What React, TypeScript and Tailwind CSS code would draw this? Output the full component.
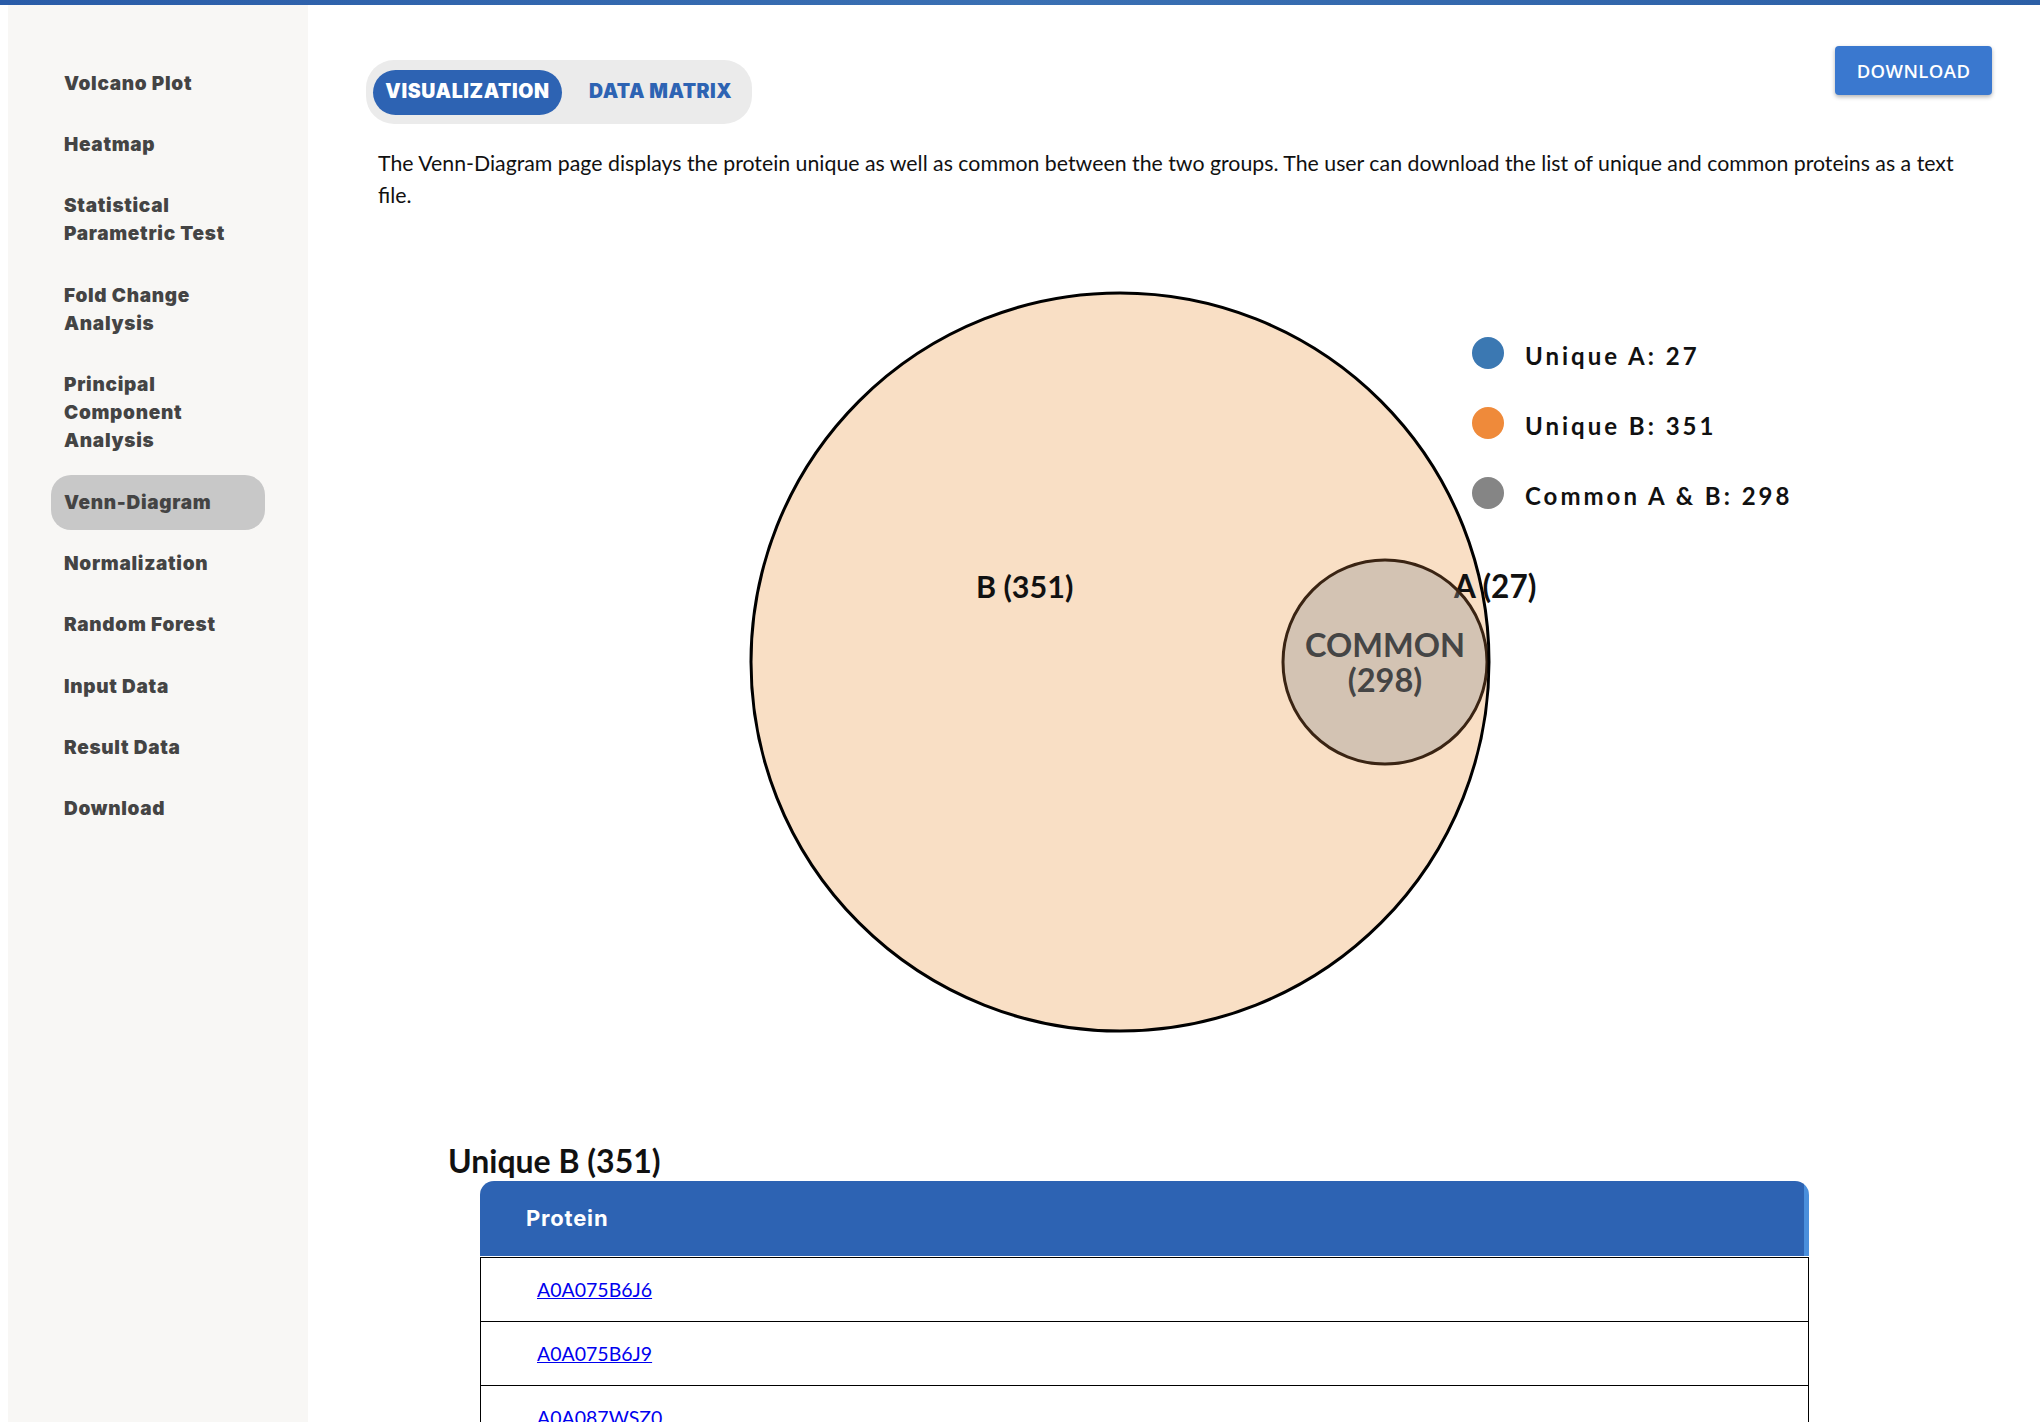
import React from "react";

const navItems: { label: string[]; active?: boolean }[] = [
  { label: ["Volcano Plot"] },
  { label: ["Heatmap"] },
  { label: ["Statistical", "Parametric Test"] },
  { label: ["Fold Change", "Analysis"] },
  { label: ["Principal", "Component", "Analysis"] },
  { label: ["Venn-Diagram"], active: true },
  { label: ["Normalization"] },
  { label: ["Random Forest"] },
  { label: ["Input Data"] },
  { label: ["Result Data"] },
  { label: ["Download"] },
];

const proteins = ["A0A075B6J6", "A0A075B6J9", "A0A087WSZ0", "A0A087WV62", "A0A0A0MS14"];

function Sidebar() {
  return (
    <aside className="w-[300px] shrink-0 bg-[#f8f7f5] pl-[43px] pt-[48px] min-h-[1417px]">
      <ul className="flex flex-col">
        {navItems.map((it) => (
          <li key={it.label.join(" ")} className="my-[3.2px]">
            <div
              className={`w-[214px] rounded-[20px] py-[13.5px] pl-[13px] text-[19px] leading-[28px] font-black tracking-[0.7px] text-[#444444] ${
                it.active ? "bg-[#c8c8c8]" : ""
              }`}
              style={{ fontFamily: "Inter, 'Noto Sans', sans-serif" }}
            >
              {it.label.map((l) => (
                <div key={l}>{l}</div>
              ))}
            </div>
          </li>
        ))}
      </ul>
    </aside>
  );
}

function Venn() {
  const lato = "Lato, 'Liberation Sans', sans-serif";
  return (
    <svg width="1626" height="930" viewBox="0 0 1626 930" className="block">
      <circle cx="754" cy="451" r="369" fill="#f9dfc5" />
      <text x="610" y="387" fontFamily={lato} fontWeight="700" fontSize="30.5" fill="#111">
        B (351)
      </text>
      <text x="1088" y="387" fontFamily={lato} fontWeight="700" fontSize="31.5" fill="#111">
        A (27)
      </text>
      <circle cx="1019" cy="451" r="102" fill="rgba(150,150,150,0.38)" stroke="#3a2413" strokeWidth="3" />
      <circle cx="754" cy="451" r="369" fill="none" stroke="#000" strokeWidth="3" />
      <text x="1019" y="446" textAnchor="middle" fontFamily={lato} fontWeight="700" fontSize="32.5" fill="#454545">
        COMMON
      </text>
      <text x="1019" y="481" textAnchor="middle" fontFamily={lato} fontWeight="700" fontSize="32.5" fill="#454545">
        (298)
      </text>

      <circle cx="1122" cy="142" r="16" fill="#3b78b2" />
      <circle cx="1122" cy="212" r="16" fill="#ef8a3a" />
      <circle cx="1122" cy="282" r="16" fill="#858585" />
      <text x="1159" y="154" fontFamily={lato} fontWeight="700" fontSize="24" letterSpacing="3" fill="#111">
        Unique A: 27
      </text>
      <text x="1159" y="224" fontFamily={lato} fontWeight="700" fontSize="24" letterSpacing="3" fill="#111">
        Unique B: 351
      </text>
      <text x="1159" y="294" fontFamily={lato} fontWeight="700" fontSize="24" letterSpacing="3" fill="#111">
        Common A &amp; B: 298
      </text>
    </svg>
  );
}

export default function App() {
  return (
    <div className="w-[2040px] bg-white" style={{ fontFamily: "Lato, 'Liberation Sans', sans-serif" }}>
      <div className="h-[5px] bg-gradient-to-r from-[#2a5ca8] via-[#3a70b3] to-[#2c5fa6]" />
      <div className="flex pl-[8px]">
        <Sidebar />
        <main className="flex-1 pl-[58px] pr-[48px]">
          <div className="flex items-start justify-between pt-[41px]">
            <div className="mt-[14px] flex h-[64px] w-[386px] items-center rounded-[28px] bg-[#ebebeb] pl-[7px]">
              <div
                className="flex h-[45px] w-[189px] items-center justify-center rounded-[24px] bg-[#2d63b3] text-[19.5px] font-black tracking-[0.6px] text-white"
                style={{ fontFamily: "Inter, 'Noto Sans', sans-serif" }}
              >
                VISUALIZATION
              </div>
              <div
                className="ml-[27px] text-[19.5px] font-black tracking-[0.5px] text-[#2d63b3]"
                style={{ fontFamily: "Inter, 'Noto Sans', sans-serif" }}
              >
                DATA MATRIX
              </div>
            </div>
            <button
              className="h-[49px] w-[157px] rounded-[4px] bg-[#3a78cf] text-[18.5px] font-semibold tracking-[0.4px] text-white shadow-[0_2px_4px_rgba(0,0,0,0.3)]"
              style={{ fontFamily: "'Open Sans', sans-serif" }}
            >
              DOWNLOAD
            </button>
          </div>
          <p className="mt-[23px] pl-[12px] text-[21.3px] leading-[32px] text-[#111]">
            The Venn-Diagram page displays the protein unique as well as common between the two groups. The user can
            download the list of unique and common proteins as a text file.
          </p>
          <Venn />
          <h2 className="ml-[82px] text-[32px] font-bold leading-[40px] text-[#111]">Unique B (351)</h2>
          <div className="ml-[114px] w-[1329px]">
            <div className="flex h-[75px] overflow-hidden rounded-t-[14px]">
              <div
                className="flex flex-1 items-center bg-[#2d63b3] pl-[46px] text-[22px] font-bold tracking-[0.8px] text-white"
                style={{ fontFamily: "Inter, 'Noto Sans', sans-serif" }}
              >
                Protein
              </div>
              <div className="w-[5px] bg-[#4a8fdc]" />
            </div>
            <div className="mt-[1px] border-l border-r border-black">
              {proteins.map((p) => (
                <div key={p} className="flex h-[64px] items-center border-t border-black pl-[56px]">
                  <a href="#" className="text-[19.5px] text-[#0000ee] underline">
                    {p}
                  </a>
                </div>
              ))}
            </div>
          </div>
        </main>
      </div>
    </div>
  );
}
